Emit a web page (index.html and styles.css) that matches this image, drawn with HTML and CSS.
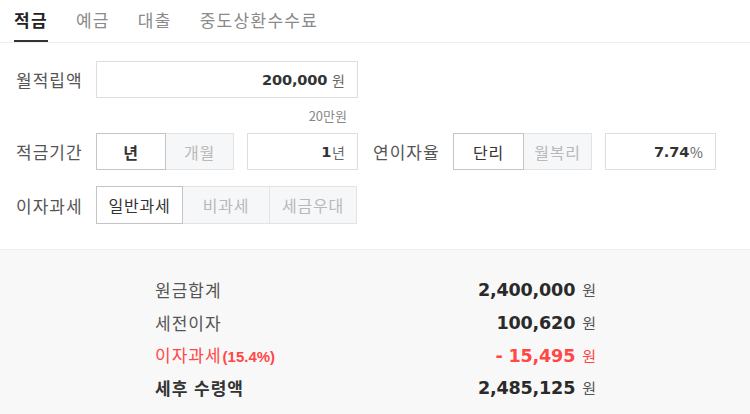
FILE: index.html
```html
<!DOCTYPE html>
<html lang="ko">
<head>
<meta charset="utf-8">
<title>적금 계산기</title>
<link rel="stylesheet" href="styles.css">
</head>
<body>
<nav class="tabs">
  <a class="tab active">적금</a>
  <a class="tab">예금</a>
  <a class="tab">대출</a>
  <a class="tab">중도상환수수료</a>
</nav>

<section class="form">
  <div class="row">
    <span class="label">월적립액</span>
    <div class="field wide"><span class="num">200,000</span><span class="unit">원</span></div>
  </div>
  <div class="hint">20만원</div>

  <div class="row">
    <span class="label">적금기간</span>
    <div class="seg">
      <span class="opt on bold w70">년</span>
      <span class="opt w68">개월</span>
    </div>
    <div class="field short"><span class="num">1</span><span class="unit tight">년</span></div>
    <span class="label mid">연이자율</span>
    <div class="seg">
      <span class="opt on w71">단리</span>
      <span class="opt w68">월복리</span>
    </div>
    <div class="field short"><span class="num">7.74</span><span class="unit tight">%</span></div>
  </div>

  <div class="row r3">
    <span class="label">이자과세</span>
    <div class="seg">
      <span class="opt on w87">일반과세</span>
      <span class="opt w87">비과세</span>
      <span class="opt w87">세금우대</span>
    </div>
  </div>
</section>

<section class="result">
  <div class="list">
    <div class="line"><span class="name">원금합계</span><span class="val"><b>2,400,000</b><i>원</i></span></div>
    <div class="line"><span class="name">세전이자</span><span class="val"><b>100,620</b><i>원</i></span></div>
    <div class="line red"><span class="name">이자과세<small>(15.4%)</small></span><span class="val"><b>- 15,495</b><i>원</i></span></div>
    <div class="line total"><span class="name">세후 수령액</span><span class="val"><b>2,485,125</b><i>원</i></span></div>
  </div>
</section>
</body>
</html>
```

FILE: styles.css
```css
html, body {
  margin: 0;
  padding: 0;
  background: #fff;
}
body {
  font-family: "Noto Sans CJK KR", "Noto Sans", sans-serif;
  color: #333;
  width: 750px;
  height: 414px;
  overflow: hidden;
}

.tabs {
  display: flex;
  gap: 28px;
  padding: 0 14px;
  height: 43px;
  border-bottom: 1px solid #eeeeee;
  box-sizing: border-box;
}
.tab {
  font-size: 17px;
  letter-spacing: 1.3px;
  line-height: 40px;
  color: #8a8a8a;
  border-bottom: 2px solid transparent;
  height: 42px;
  box-sizing: border-box;
}
.tab.active {
  color: #222;
  font-weight: 700;
  border-bottom-color: #333;
}

.form {
  padding: 18px 0 0 16px;
  height: 206px;
  box-sizing: border-box;
}
.row {
  display: flex;
  align-items: center;
  height: 37px;
}
.r3 {
  margin-top: 16px;
  height: 38px;
}
.label {
  width: 80px;
  font-size: 17px;
  letter-spacing: 1px;
  color: #555;
}
.label.mid {
  width: 67px;
  margin: 0 13px 0 15px;
}

.field {
  height: 37px;
  box-sizing: border-box;
  border: 1px solid #dedede;
  display: flex;
  align-items: center;
  justify-content: flex-end;
  padding-right: 12px;
  background: #fff;
}
.field.wide { width: 262px; }
.field.short { width: 111px; margin-left: 13px; }
.num {
  font-family: "DejaVu Sans", sans-serif;
  font-weight: 700;
  font-size: 14.6px;
  color: #333;
  letter-spacing: -0.2px;
}
.unit {
  font-size: 14px;
  color: #666;
  margin-left: 5px;
}
.unit.tight { margin-left: 1px; }

.hint {
  width: 251px;
  margin-left: 80px;
  text-align: right;
  font-size: 13px;
  color: #888;
  line-height: 35px;
  height: 35px;
}

.seg {
  display: flex;
  height: 100%;
}
.opt {
  box-sizing: border-box;
  height: 100%;
  display: flex;
  align-items: center;
  justify-content: center;
  border: 1px solid #e3e3e3;
  border-left: none;
  background: #f6f7f9;
  color: #b9b9b9;
  font-size: 16px;
  letter-spacing: 0.8px;
}
.opt.on {
  border: 1px solid #c4c4c4;
  background: #fff;
  color: #333;
}
.opt.bold { font-weight: 700; }
.w70 { width: 70px; }
.w68 { width: 68px; }
.w71 { width: 71px; }
.w87 { width: 87px; }

.result {
  background: #f8f8f8;
  border-top: 1px solid #f0f0f0;
  height: 165px;
  box-sizing: border-box;
  padding: 23px 0 0 155px;
}
.list {
  width: 441px;
  display: flex;
  flex-direction: column;
}
.line {
  display: flex;
  justify-content: space-between;
  align-items: center;
  height: 32.7px;
}
.name {
  font-size: 17px;
  letter-spacing: 1px;
  color: #555;
}
.name small {
  font-family: "Liberation Sans", sans-serif;
  font-weight: 700;
  font-size: 15px;
  letter-spacing: 0;
  margin-left: 1px;
}
.val b {
  font-family: "DejaVu Sans", sans-serif;
  font-weight: 700;
  font-size: 17.6px;
  color: #2a2a2a;
  letter-spacing: -0.2px;
}
.val i {
  font-style: normal;
  font-size: 15px;
  color: #555;
  margin-left: 7px;
}
.line.red .name,
.line.red .val b,
.line.red .val i {
  color: #ff4747;
}
.line.total .name {
  font-weight: 700;
  color: #333;
}
```
